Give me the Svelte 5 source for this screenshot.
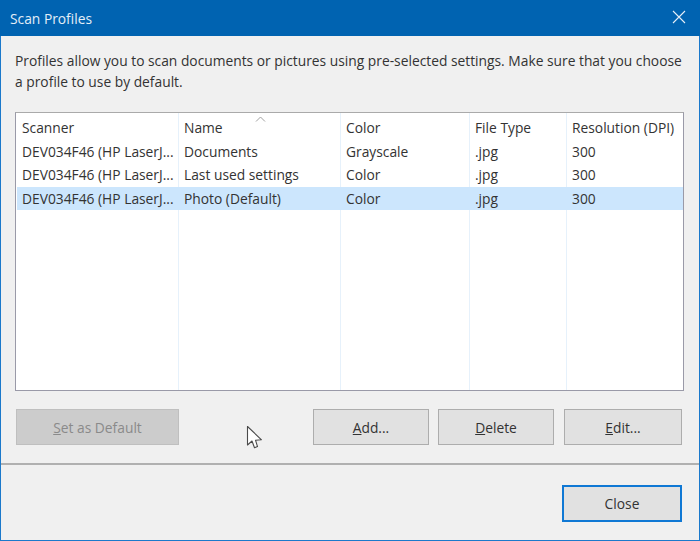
<script>
	const columns = ['Scanner', 'Name', 'Color', 'File Type', 'Resolution (DPI)'];
	const scanner = 'DEV034F46 (HP LaserJ...';
	const profiles = [
		{ name: 'Documents', color: 'Grayscale', type: '.jpg', dpi: '300' },
		{ name: 'Last used settings', color: 'Color', type: '.jpg', dpi: '300' },
		{ name: 'Photo (Default)', color: 'Color', type: '.jpg', dpi: '300', selected: true }
	];
</script>

<div class="window">
	<header class="titlebar">
		<span>Scan Profiles</span>
		<svg class="close-x" width="14" height="14" viewBox="0 0 14 14">
			<path d="M1 1 L13 13 M13 1 L1 13" stroke="#e6eff7" stroke-width="1.1" fill="none" />
		</svg>
	</header>

	<div class="content">
		<p class="intro">Profiles allow you to scan documents or pictures using pre-selected settings. Make sure that you choose a profile to use by default.</p>

		<div class="list">
			<div class="guides">
				<i></i><i></i><i></i><i></i><i></i>
			</div>
			<div class="row head">
				{#each columns as col, i}
					<div class="cell">
						{#if i === 1}
							<svg class="sort" width="11" height="6" viewBox="0 0 11 6">
								<path d="M1 5.5 L5.5 1 L10 5.5" stroke="#a0a0a0" fill="none" />
							</svg>
						{/if}
						{col}
					</div>
				{/each}
			</div>
			{#each profiles as p}
				<div class="row" class:selected={p.selected}>
					<div class="cell">{scanner}</div>
					<div class="cell">{p.name}</div>
					<div class="cell">{p.color}</div>
					<div class="cell">{p.type}</div>
					<div class="cell">{p.dpi}</div>
				</div>
			{/each}
		</div>

		<div class="actions">
			<button class="btn default" disabled><u>S</u>et as Default</button>
			<div class="right">
				<button class="btn"><u>A</u>dd...</button>
				<button class="btn"><u>D</u>elete</button>
				<button class="btn edit"><u>E</u>dit...</button>
			</div>
		</div>
	</div>

	<footer class="footer">
		<button class="btn close">Close</button>
	</footer>

	<svg class="cursor" width="17" height="25" viewBox="0 0 17 25">
		<path d="M1.5 1.5 V20 L6 16 L8.5 22.8 L11.5 21.6 L9.5 15.2 L15.5 14.8 Z" fill="#fff" stroke="#4a4a4a" stroke-width="1.1" stroke-linejoin="round" />
	</svg>
</div>

<style>
	:global(body) {
		margin: 0;
	}

	.window {
		position: relative;
		box-sizing: border-box;
		width: 700px;
		height: 541px;
		display: flex;
		flex-direction: column;
		background: #f0f0f0;
		border: 1px solid #1b79cb;
		border-top: 0;
		font-family: "Open Sans", "Noto Sans", sans-serif;
		font-size: 13.8px;
		color: #333;
	}

	.titlebar {
		flex: none;
		height: 36px;
		margin: 0 -1px;
		padding: 0 10px;
		display: flex;
		align-items: center;
		justify-content: space-between;
		background: #0063b1;
		color: #e3eef7;
	}

	.close-x {
		margin-right: 4px;
		margin-top: -2px;
	}

	.content {
		flex: none;
		height: 429px;
		box-sizing: border-box;
		padding: 14px 15px 0 14px;
		border-bottom: 2px solid #b0b0b0;
	}

	.intro {
		margin: 0;
		line-height: 21px;
	}

	.list {
		position: relative;
		margin-top: 20px;
		height: 279px;
		box-sizing: border-box;
		background: #fff;
		border: 1px solid #9a9aa8;
		border-top-color: #aaa;
		padding-top: 1px;
	}

	.guides {
		position: absolute;
		inset: 0;
		display: grid;
		grid-template-columns: 163px 162px 129px 97px 1fr;
	}

	.guides i {
		border-right: 1px solid #e6f1fb;
	}

	.guides i:last-child {
		border-right: 0;
	}

	.row {
		position: relative;
		display: grid;
		grid-template-columns: 163px 162px 129px 97px 1fr;
		height: 23.5px;
		line-height: 23.5px;
	}

	.head {
		height: 25.5px;
		line-height: 28px;
	}

	.selected {
		background: #cce6fd;
		box-shadow: inset 1px 0 0 #fff;
	}

	.cell {
		position: relative;
		padding-left: 5px;
		white-space: nowrap;
		overflow: hidden;
	}

	.cell:first-child {
		padding-left: 6px;
	}

	.sort {
		position: absolute;
		left: 76px;
		top: 2px;
	}

	.actions {
		margin-top: 18px;
		padding-right: 2px;
		display: flex;
		justify-content: space-between;
	}

	.right {
		display: flex;
		gap: 9px;
	}

	.btn {
		box-sizing: border-box;
		width: 116px;
		height: 36px;
		padding: 0;
		background: #e1e1e1;
		border: 1px solid #adadad;
		font: inherit;
		color: #333;
	}

	.edit {
		width: 118px;
		margin-left: 1px;
	}

	.default {
		width: 163px;
		background: #cccccc;
		border-color: #bfbfbf;
		color: #8a8a8a;
		margin-left: 1px;
	}

	.footer {
		flex: 1;
		display: flex;
		justify-content: flex-end;
		align-items: flex-start;
		padding: 20px 17px 0 0;
	}

	.close {
		width: 120px;
		height: 37px;
		border: 2px solid #0f78d4;
	}

	.cursor {
		position: absolute;
		left: 245px;
		top: 425px;
	}
</style>
